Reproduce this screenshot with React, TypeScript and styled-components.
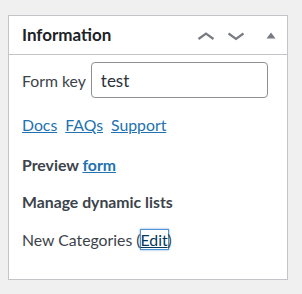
import React from "react";
import styled, { createGlobalStyle } from "styled-components";

const GlobalStyle = createGlobalStyle`
  html, body {
    margin: 0;
    background: #f0f0f1;
  }
  body {
    font-family: Lato, "Open Sans", sans-serif;
    color: #3c434a;
  }
`;

const Page = styled.div`
  padding: 15px 0 0 8px;
`;

const Postbox = styled.section`
  width: 280px;
  box-sizing: border-box;
  background: #fff;
  border: 1px solid #c3c4c7;
`;

const Header = styled.div`
  display: flex;
  align-items: center;
  height: 38px;
  padding: 0 5px 0 13px;
  border-bottom: 1px solid #c3c4c7;
`;

const Title = styled.h2`
  flex: 1;
  margin: 0;
  font-size: 17px;
  font-weight: 700;
  line-height: 1.2;
  color: #1d2327;
`;

const HandleButton = styled.button<{ $gap?: number }>`
  display: flex;
  align-items: center;
  justify-content: center;
  height: 38px;
  padding: 0 5px;
  margin: 0 0 0 ${(p) => p.$gap ?? 0}px;
  border: 0;
  background: none;
  color: #787c82;
  cursor: pointer;
`;

const Inside = styled.div`
  padding: 7px 13px 27px 13px;
  font-size: 15.8px;
  line-height: 24px;
`;

const FieldRow = styled.label`
  display: flex;
  align-items: center;
  gap: 5px;
`;

const FieldLabel = styled.span`
  padding-top: 1px;
  color: #3c434a;
`;

const TextInput = styled.input`
  width: 177px;
  height: 36px;
  box-sizing: border-box;
  padding: 0 9px;
  border: 1px solid #8c8f94;
  border-radius: 4px;
  font-family: inherit;
  font-size: 17px;
  color: #2c3338;
  background: #fff;
  outline: none;
`;

const LinkRow = styled.div`
  display: flex;
  gap: 8px;
  margin-top: 15px;
`;

const Link = styled.a<{ $focused?: boolean }>`
  color: ${(p) => (p.$focused ? "#043959" : "#2271b1")};
  text-decoration: underline;
  text-underline-offset: 1px;
  ${(p) =>
    p.$focused &&
    `box-shadow: 0 0 0 1px #4f94d4, 0 0 2px 1px rgba(79, 148, 212, 0.8);`}
`;

const Strong = styled.p<{ $top: number }>`
  margin: ${(p) => p.$top}px 0 0;
  font-weight: 700;
  color: #3c434a;
`;

const ListItem = styled.p`
  margin: 14px 0 0;
  color: #3c434a;
`;

const Chevron = ({ dir }: { dir: "up" | "down" }) => (
  <svg width="20" height="14" viewBox="0 0 20 14" aria-hidden="true">
    <polyline
      points={dir === "up" ? "2.5,11 10,5.5 17.5,11" : "2.5,5.5 10,11 17.5,5.5"}
      fill="none"
      stroke="currentColor"
      strokeWidth="2.2"
    />
  </svg>
);

const Triangle = () => (
  <svg width="12" height="14" viewBox="0 0 12 14" aria-hidden="true">
    <polygon points="1.5,10.5 6,4.5 10.5,10.5" fill="currentColor" />
  </svg>
);

export default function App() {
  return (
    <>
      <GlobalStyle />
      <Page>
        <Postbox>
          <Header>
            <Title>Information</Title>
            <HandleButton aria-label="Move up">
              <Chevron dir="up" />
            </HandleButton>
            <HandleButton aria-label="Move down">
              <Chevron dir="down" />
            </HandleButton>
            <HandleButton $gap={9} aria-label="Toggle panel">
              <Triangle />
            </HandleButton>
          </Header>
          <Inside>
            <FieldRow>
              <FieldLabel>Form key</FieldLabel>
              <TextInput defaultValue="test" />
            </FieldRow>
            <LinkRow>
              <Link href="#">Docs</Link>
              <Link href="#">FAQs</Link>
              <Link href="#">Support</Link>
            </LinkRow>
            <Strong $top={16}>
              Preview <Link href="#">form</Link>
            </Strong>
            <Strong $top={13}>Manage dynamic lists</Strong>
            <ListItem>
              New Categories (<Link href="#" $focused>Edit</Link>)
            </ListItem>
          </Inside>
        </Postbox>
      </Page>
    </>
  );
}
